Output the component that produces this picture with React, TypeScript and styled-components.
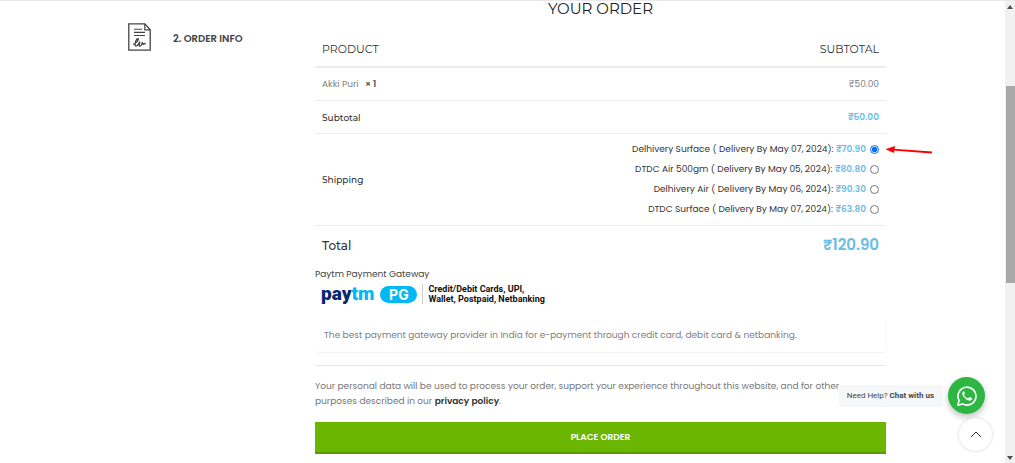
import React, { useState } from "react";
import styled, { createGlobalStyle, css } from "styled-components";

const GlobalStyle = createGlobalStyle`
  *, *::before, *::after { box-sizing: border-box; }
  body {
    margin: 0;
    background: #fff;
    color: #333;
    font-family: Poppins, Inter, "Liberation Sans", sans-serif;
    font-size: 9px;
    line-height: 15px;
    overflow: hidden;
  }
`;

const Page = styled.div`
  display: flex;
  min-height: 100vh;
  border-top: 1px solid #e9e9e9;
`;

const Checkout = styled.main`
  flex: 1;
  display: flex;
  align-items: flex-start;
  padding: 0 119px 9px 128px;
`;

const Step = styled.section`
  flex: 0 0 187px;
  display: flex;
  align-items: center;
  gap: 22px;
  padding-top: 22px;
`;

const StepTitle = styled.h2`
  margin: 0;
  padding-top: 2px;
  color: #444;
  font-size: 10px;
  font-weight: 600;
  line-height: 15px;
`;

const Order = styled.section`
  flex: 1;
  min-width: 0;
`;

const OrderTitle = styled.h1`
  margin: 0;
  color: #222;
  font-family: Montserrat, Inter, sans-serif;
  font-size: 15px;
  font-weight: 400;
  line-height: 16px;
  text-align: center;
`;

const Table = styled.table`
  width: 100%;
  margin-top: 15px;
  border-collapse: separate;
  border-spacing: 0;
`;

const Row = styled.tr<{ $line?: number }>`
  & > * {
    border-bottom: ${(p) => p.$line ?? 1}px solid #ededed;
  }
`;

const cell = css<{ $right?: boolean; $height?: number }>`
  height: ${(p) => p.$height ?? 33}px;
  padding: 0 7px 0 7px;
  text-align: ${(p) => (p.$right ? "right" : "left")};
  vertical-align: middle;
`;

const HeadCell = styled.th`
  ${cell}
  font-family: Montserrat, Inter, sans-serif;
  font-size: 11px;
  font-weight: 400;
`;

const LabelCell = styled.th<{ $large?: boolean }>`
  ${cell}
  font-family: Montserrat, Inter, sans-serif;
  font-size: ${(p) => (p.$large ? 12 : 9)}px;
  font-weight: 500;
`;

const Cell = styled.td`
  ${cell}
  color: #808080;
`;

const Quantity = styled.strong`
  margin-left: 4px;
  color: #555;
  font-weight: 600;
`;

const Price = styled.span<{ $large?: boolean }>`
  color: #69bce3;
  font-size: ${(p) => (p.$large ? 15 : 9)}px;
  font-weight: 600;
`;

const Methods = styled.ul`
  display: flex;
  flex-direction: column;
  gap: 5px;
  margin: 0;
  padding: 0;
  list-style: none;
  color: #333;
`;

const Method = styled.li`
  position: relative;
  display: flex;
  align-items: center;
  justify-content: flex-end;
  gap: 4px;
`;

const Radio = styled.input`
  width: 9px;
  height: 9px;
  margin: 0;
  accent-color: #0b6cf0;
`;

const Pointer = styled.svg`
  position: absolute;
  left: 100%;
  top: 3px;
  margin-left: 7px;
`;

const Gateway = styled.h3`
  margin: 0;
  padding-top: 2px;
  color: #444;
  font-size: 9px;
  font-weight: 400;
`;

const GatewayBrand = styled.div`
  display: flex;
  align-items: center;
  height: 24px;
  padding-left: 6px;
`;

const Wordmark = styled.span`
  color: #02286f;
  font-family: Roboto, sans-serif;
  font-size: 19px;
  font-weight: 900;
  line-height: 20px;

  em {
    color: #00b9f5;
    font-style: normal;
  }
`;

const Pill = styled.span`
  width: 37px;
  margin-left: 6px;
  border-radius: 9px;
  background: #00b9f5;
  color: #fff;
  font-family: Inter, sans-serif;
  font-size: 14px;
  font-weight: 700;
  line-height: 17px;
  text-align: center;
`;

const Tagline = styled.span`
  margin-left: 5px;
  padding-left: 5px;
  border-left: 1px solid #ccc;
  color: #111;
  font-family: Roboto, sans-serif;
  font-size: 9px;
  font-weight: 700;
  line-height: 10px;
`;

const Description = styled.p`
  margin: 12px 0;
  padding: 10px 9px 9px;
  border-bottom: 1px solid #f3f3f3;
  border-right: 1px solid #f8f8f8;
  border-radius: 4px;
  color: #808080;
`;

const Privacy = styled.p`
  margin: 0 0 13px;
  padding: 13px 24px 0 0;
  border-top: 1px solid #e9e9e9;
  color: #777;
`;

const PolicyLink = styled.a`
  color: #333;
  font-weight: 600;
  text-decoration: none;
`;

const PlaceOrder = styled.button`
  display: block;
  width: 100%;
  height: 32px;
  padding: 0;
  border: 0;
  border-bottom: 2px solid #5a9a00;
  background: #6bb600;
  color: #fff;
  font: inherit;
  font-weight: 600;
  cursor: pointer;
`;

const Floating = styled.aside`
  position: fixed;
  right: 23px;
  bottom: 12px;
  display: flex;
  flex-direction: column;
  align-items: flex-end;
  gap: 4px;
`;

const Chat = styled.div`
  display: flex;
  align-items: center;
  gap: 5px;
  margin-right: 7px;
`;

const ChatLabel = styled.span`
  padding: 3px 9px 4px 8px;
  border-radius: 3px;
  background: #f5f7f9;
  color: #43474e;
  font-family: Roboto, "Liberation Sans", sans-serif;
  font-size: 8px;
  white-space: nowrap;
`;

const RoundButton = styled.button<{ $green?: boolean }>`
  display: grid;
  place-items: center;
  width: ${(p) => (p.$green ? 37 : 33)}px;
  height: ${(p) => (p.$green ? 37 : 33)}px;
  padding: 0;
  border: 0;
  border-radius: 50%;
  background: ${(p) => (p.$green ? "#2db742" : "#fff")};
  box-shadow: ${(p) =>
    p.$green ? "0 3px 6px rgba(0, 0, 0, 0.25)" : "0 0 3px rgba(0, 0, 0, 0.2)"};
  cursor: pointer;
`;

const Scrollbar = styled.div`
  flex: 0 0 10px;
  display: flex;
  flex-direction: column;
  align-items: center;
  padding: 4px 0 3px;
  background: #f1f1f1;
`;

const Thumb = styled.div`
  width: 9px;
  height: 197px;
  margin: 77px 0 auto;
  background: #a8a8a8;
`;

const methods = [
  { name: "Delhivery Surface ( Delivery By May 07, 2024):", price: "₹70.90" },
  { name: "DTDC Air 500gm ( Delivery By May 05, 2024):", price: "₹80.80" },
  { name: "Delhivery Air ( Delivery By May 06, 2024):", price: "₹90.30" },
  { name: "DTDC Surface ( Delivery By May 07, 2024):", price: "₹63.80" },
];

function DocumentIcon() {
  return (
    <svg width="23" height="28" viewBox="0 0 23 28" fill="none" stroke="#444" aria-hidden="true">
      <path d="M.8.8h16l5.400 6v20.400H.8z" strokeWidth="1.300" />
      <path d="M16.800.8v6h5.400" strokeWidth="1.200" />
      <path d="M6 6.200h8M6 9.400h11M6 12.500h11" strokeWidth="1.100" />
      <path
        d="M5 21.500C8 20.500 11.500 16 10 15.600 8 15.200 5.800 23 8 23.200c1.800.1 3.400-4.300 3.800-4.200.4.200-1.600 4.200.2 4.100 1.600-.1 2.600-3.400 2.300-4 0 2.200.9 2.700 1.600 1.500.5-.9.700 1.100 1.800-.1"
        strokeWidth="1.300"
      />
    </svg>
  );
}

function ArrowPointer() {
  return (
    <Pointer width="47" height="12" viewBox="0 0 47 12" aria-hidden="true">
      <path d="M7 4.700 46 7.500" stroke="#f00" strokeWidth="1.800" />
      <path d="M-1 4.200 9 1 8 8z" fill="#f00" />
    </Pointer>
  );
}

function WhatsAppIcon() {
  return (
    <svg width="20" height="20" viewBox="0 0 20 20" aria-hidden="true">
      <path
        d="M.8 19.200 2.100 14.400A9 9 0 1 1 5.500 17.900z"
        fill="none"
        stroke="#fff"
        strokeWidth="1.600"
        strokeLinejoin="round"
      />
      <path
        d="M6.900 5.200c-.5-.2-1.700.9-1.700 2.300 0 1.200.9 2.400 1.300 2.900 1.700 2.300 3.700 3.700 5.900 4.200 1.300.2 2.700-.8 2.700-1.900 0-.5.100-.6-.3-.8l-1.900-.9c-.300-.1-.5-.1-.8.2l-.8 1c-.200.200-.4.200-.7.1-1.500-.6-2.600-1.600-3.500-3.100-.100-.300 0-.4.200-.6l.6-.8c.1-.2.100-.4 0-.6l-.8-1.700z"
        fill="#fff"
      />
    </svg>
  );
}

export default function App() {
  const [selected, setSelected] = useState(0);

  return (
    <>
      <GlobalStyle />
      <Page>
        <Checkout>
          <Step>
            <DocumentIcon />
            <StepTitle>2. ORDER INFO</StepTitle>
          </Step>
          <Order>
            <OrderTitle>YOUR ORDER</OrderTitle>
            <Table>
              <thead>
                <Row $line={2}>
                  <HeadCell $height={36}>PRODUCT</HeadCell>
                  <HeadCell $right $height={36}>SUBTOTAL</HeadCell>
                </Row>
              </thead>
              <tbody>
                <Row>
                  <Cell>
                    Akki Puri <Quantity>× 1</Quantity>
                  </Cell>
                  <Cell $right>₹50.00</Cell>
                </Row>
                <Row>
                  <LabelCell scope="row">Subtotal</LabelCell>
                  <Cell $right>
                    <Price>₹50.00</Price>
                  </Cell>
                </Row>
                <Row>
                  <LabelCell scope="row" $height={92}>Shipping</LabelCell>
                  <Cell $right $height={92}>
                    <Methods>
                      {methods.map((m, i) => (
                        <Method key={m.name}>
                          <label htmlFor={`shipping-${i}`}>
                            {m.name} <Price>{m.price}</Price>
                          </label>
                          <Radio
                            type="radio"
                            name="shipping"
                            id={`shipping-${i}`}
                            checked={selected === i}
                            onChange={() => setSelected(i)}
                          />
                          {i === 0 && <ArrowPointer />}
                        </Method>
                      ))}
                    </Methods>
                  </Cell>
                </Row>
                <Row $line={0}>
                  <LabelCell scope="row" $large $height={39}>Total</LabelCell>
                  <Cell $right $height={39}>
                    <Price $large>₹120.90</Price>
                  </Cell>
                </Row>
              </tbody>
            </Table>
            <Gateway>Paytm Payment Gateway</Gateway>
            <GatewayBrand>
              <Wordmark>
                pay<em>tm</em>
              </Wordmark>
              <Pill>PG</Pill>
              <Tagline>
                Credit/Debit Cards, UPI,
                <br />
                Wallet, Postpaid, Netbanking
              </Tagline>
            </GatewayBrand>
            <Description>
              The best payment gateway provider in India for e-payment through credit card, debit card &amp; netbanking.
            </Description>
            <Privacy>
              Your personal data will be used to process your order, support your experience throughout this website, and for other purposes described in our{" "}
              <PolicyLink href="#privacy">privacy policy</PolicyLink>.
            </Privacy>
            <PlaceOrder type="button">PLACE ORDER</PlaceOrder>
          </Order>
        </Checkout>
        <Scrollbar aria-hidden="true">
          <svg width="6" height="4" viewBox="0 0 6 4"><path d="M3 0 6 4H0z" fill="#505050" /></svg>
          <Thumb />
          <svg width="6" height="4" viewBox="0 0 6 4"><path d="M3 4 0 0h6z" fill="#505050" /></svg>
        </Scrollbar>
      </Page>
      <Floating>
        <Chat>
          <ChatLabel>
            Need Help? <strong>Chat with us</strong>
          </ChatLabel>
          <RoundButton $green type="button" aria-label="Chat on WhatsApp">
            <WhatsAppIcon />
          </RoundButton>
        </Chat>
        <RoundButton type="button" aria-label="Back to top">
          <svg width="12" height="7" viewBox="0 0 12 7" fill="none" stroke="#333" aria-hidden="true">
            <path d="M1 6 6 1l5 5" />
          </svg>
        </RoundButton>
      </Floating>
    </>
  );
}
